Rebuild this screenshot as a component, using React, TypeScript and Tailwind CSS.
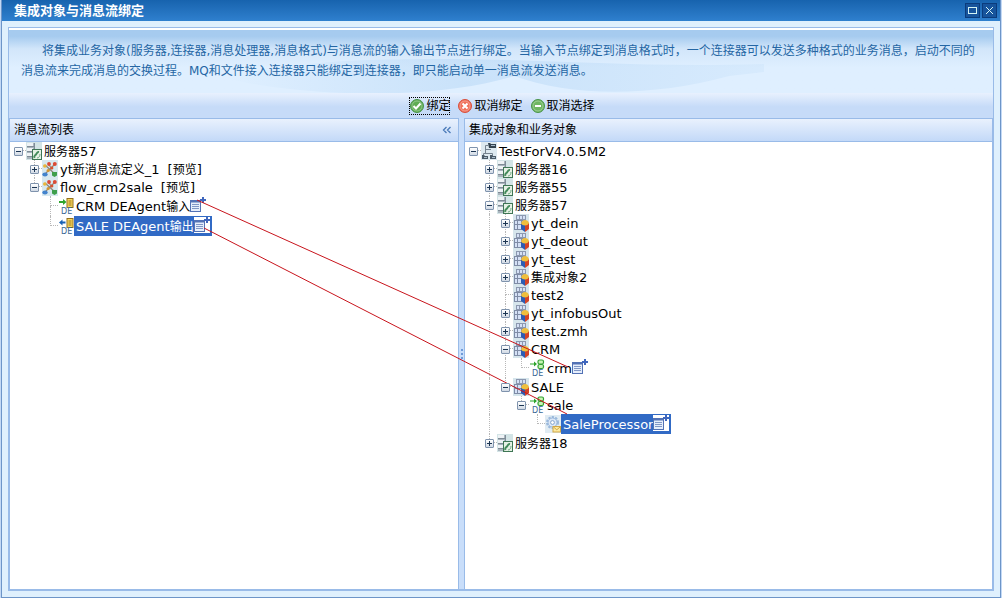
import type { ReactNode } from "react";

type Kind = "server" | "flow" | "agentIn" | "agentOut" | "adapter" | "root" | "object" | "processor";

interface Node {
  label: string;
  kind: Kind;
  open?: boolean;
  preview?: boolean;
  linked?: boolean;
  selected?: boolean;
  children?: Node[];
}

const flows: Node[] = [
  {
    label: "服务器57", kind: "server", open: true, children: [
      { label: "yt新消息流定义_1", kind: "flow", open: false, preview: true },
      {
        label: "flow_crm2sale", kind: "flow", open: true, preview: true, children: [
          { label: "CRM DEAgent输入", kind: "agentIn", linked: true },
          { label: "SALE DEAgent输出", kind: "agentOut", linked: true, selected: true },
        ],
      },
    ],
  },
];

const objects: Node[] = [
  {
    label: "TestForV4.0.5M2", kind: "root", open: true, children: [
      { label: "服务器16", kind: "server", open: false },
      { label: "服务器55", kind: "server", open: false },
      {
        label: "服务器57", kind: "server", open: true, children: [
          { label: "yt_dein", kind: "object", open: false },
          { label: "yt_deout", kind: "object", open: false },
          { label: "yt_test", kind: "object", open: false },
          { label: "集成对象2", kind: "object", open: false },
          { label: "test2", kind: "object" },
          { label: "yt_infobusOut", kind: "object", open: false },
          { label: "test.zmh", kind: "object", open: false },
          {
            label: "CRM", kind: "object", open: true,
            children: [{ label: "crm", kind: "adapter", linked: true }],
          },
          {
            label: "SALE", kind: "object", open: true, children: [
              {
                label: "sale", kind: "adapter", open: true,
                children: [{ label: "SaleProcessor", kind: "processor", linked: true, selected: true }],
              },
            ],
          },
        ],
      },
      { label: "服务器18", kind: "server", open: false },
    ],
  },
];

/* Han text is set one size smaller than Latin text. */
function Mixed({ text }: { text: string }) {
  return (
    <>
      {text.split(/([\u4e00-\u9fff]+)/).filter(Boolean).map((part, i) => (
        <span key={i} className={/[\u4e00-\u9fff]/.test(part) ? "text-[12px]" : "text-[13px]"}>{part}</span>
      ))}
    </>
  );
}

function Letters() {
  return <text x="3" y="17" fontSize="8" fontFamily="DejaVu Sans" fill="#3a6794">DE</text>;
}

function NodeIcon({ kind }: { kind: Kind }) {
  let art: ReactNode;
  if (kind === "server") {
    art = (
      <>
        <rect width="16" height="18" fill="#d3e4e6" />
        <rect x="1" y="1" width="8" height="16" fill="#a9b4bd" />
        <path d="M1 1h6v3H1zM1 6h6v3H1zM1 11h6v3H1z" fill="#eef2f5" />
        <path d="M1 4.500h7M1 9.500h7M1 14.500h7M8.500 1v16" stroke="#7f8c97" />
        <rect x="6.500" y="7.500" width="9" height="10" fill="#e6f1e5" stroke="#3f7655" />
        <path d="M8.500 16c-1-2 .5-2.500 1.500-3.500s1-3 3-2.500" fill="none" stroke="#438a5a" strokeWidth="2" />
        <path d="M11 16c2 0 3-2 3-4" fill="none" stroke="#6fa983" />
      </>
    );
  } else if (kind === "flow") {
    art = (
      <>
        <rect width="16" height="18" fill="#d7e8ef" />
        <path d="M3 5l10 9M13 4L3 14M7 5l3 4" stroke="#8d8578" strokeWidth="1.200" />
        <circle cx="2.800" cy="6" r="1.800" fill="#e9b63a" />
        <circle cx="7" cy="4" r="1.900" fill="#dc4a34" />
        <circle cx="12.800" cy="4" r="2" fill="#dc4a34" />
        <circle cx="9.800" cy="8" r="1.600" fill="#d9532f" />
        <circle cx="6.200" cy="10.500" r="1.600" fill="#d6962e" />
        <ellipse cx="3" cy="14.500" rx="2.700" ry="2" fill="#4383cd" />
        <path d="M10 12h5v3.500l-2.500 1.500-2.500-1.500z" fill="#3f9f4c" />
      </>
    );
  } else if (kind === "agentIn" || kind === "agentOut") {
    art = (
      <>
        {kind === "agentIn"
          ? <path d="M1 4h4V2l3.500 3L5 8V6H1z" fill="#2da52b" />
          : <path d="M7.500 4.500H4.500V2.500L1 5.500l3.500 3v-2h3z" fill="#1760b5" />}
        <rect x="9" y="1.500" width="6" height="9" fill="#f6d65c" stroke="#94701c" />
        <path d="M10.500 4h3M10.500 6h3M10.500 8h3" stroke="#94701c" strokeWidth=".9" />
        <Letters />
      </>
    );
  } else if (kind === "adapter") {
    art = (
      <>
        <path d="M1 4.500h4V2.500l3 2.500-3 2.500v-2H1z" fill="#2da52b" />
        <rect x="9" y="1" width="5.500" height="4" rx="1.500" fill="#c8f4b4" stroke="#33a033" strokeWidth="1.200" />
        <rect x="9" y="5.500" width="5.500" height="4" rx="1.500" fill="#c8f4b4" stroke="#33a033" strokeWidth="1.200" />
        <Letters />
      </>
    );
  } else if (kind === "root") {
    art = (
      <>
        <rect width="16" height="18" fill="#dde9f0" />
        <path d="M7 3.500H4.500V11M4.500 7.500H10M2.500 14V11.500h9V14" stroke="#75838f" fill="none" />
        <path d="M7 1h2l1 1h5v4H8z" fill="#34434f" />
        <path d="M1 13h2l1 1h3v3H1zM9 13h2l1 1h3v3H9z" fill="#4c5c69" />
        <path d="M10 3.500h4M3 15.500h3M11 15.500h3" stroke="#a9bccb" />
      </>
    );
  } else if (kind === "object") {
    art = (
      <>
        <rect width="16" height="18" fill="#d6e5ec" />
        <path d="M3 1h10v11H1V6h2z" fill="#8c98b0" />
        <path d="M1 6h9v10H1z" fill="#7f8ca6" />
        <path d="M4 2h2v3H4zM7 2h2v3H7zM10 2h2v3h-2zM2 7h2v3H2zM5 7h3v3H5zM9 7h3v2H9zM2 11h2v4H2zM5 11h3v4H5z" fill="#d5e1f6" />
        <path d="M8 9l4 1.500V18l-4-3z" fill="#2c5cb3" />
        <path d="M12 10.500L16 9v6l-4 3z" fill="#d34327" />
        <path d="M8 9.500Q9 6 12 6t4 3q-1 2.500-4 2.500T8 9.500z" fill="#efbf3d" />
      </>
    );
  } else {
    art = (
      <>
        <rect width="16" height="18" fill="#e1ecf3" />
        <circle cx="7.500" cy="7.500" r="5.500" fill="none" stroke="#9ab8dc" strokeWidth="2" strokeDasharray="2.300 1.200" />
        <circle cx="7.500" cy="7.500" r="4.500" fill="#dbe7f7" stroke="#9ab8dc" />
        <circle cx="7.500" cy="7.500" r="1.900" fill="#fff" stroke="#83a3cc" />
        <rect x="8" y="11.500" width="7.500" height="5.500" fill="#fdeaa0" stroke="#d2a746" />
        <path d="M8.500 12l3.300 2.800L15 12" fill="none" stroke="#d2a746" />
      </>
    );
  }
  return <svg className="h-[18px] w-4 shrink-0" viewBox="0 0 16 18" aria-hidden="true">{art}</svg>;
}

function LinkIcon({ selected }: { selected?: boolean }) {
  return (
    <svg className="h-5 w-[18px] shrink-0" viewBox="0 0 18 20" aria-hidden="true">
      {selected && <rect y="1" width="16" height="16" fill="#fff" />}
      <rect x=".5" y="4.500" width="10" height="11" fill="#e6eefb" stroke="#5372b5" />
      <path d="M1 5.500h9" stroke="#5372b5" strokeWidth="2" />
      <path d="M2 8.500h7M2 10.500h7M2 12.500h7" stroke="#8097c6" />
      <path d="M13 1v6M10 4h6" stroke="#3f66bd" strokeWidth="2" />
    </svg>
  );
}

const guide = "border-dotted border-[#b8b8b8]";

function Row({ node, guides, last, first }: { node: Node; guides: boolean[]; last: boolean; first: boolean }) {
  return (
    <li role="treeitem" aria-expanded={node.open} aria-selected={!!node.selected}>
      <div className={`flex items-center whitespace-nowrap ${node.linked ? "h-5" : "h-[18px]"}`}>
        {guides.map((on, i) => (
          <span key={i} className="flex w-4 shrink-0 self-stretch pl-2">
            {on && <span className={`border-l ${guide}`} />}
          </span>
        ))}
        <span className="grid w-4 shrink-0 grid-cols-2 grid-rows-2 self-stretch">
          <span className={`col-start-2 row-start-1 border-b ${guide} ${first ? "" : "border-l"}`} />
          <span className={`col-start-2 row-start-2 ${guide} ${last ? "" : "border-l"}`} />
          {node.open !== undefined && (
            <button
              type="button"
              aria-label={`${node.open ? "收起" : "展开"} ${node.label}`}
              className="z-10 col-span-2 col-start-1 row-span-2 row-start-1 flex size-[9px] place-self-center rounded-[1px] border border-[#7f93ad] bg-linear-to-b from-white to-[#d0d9e4]"
            >
              <svg className="size-[7px]" viewBox="0 0 7 7" aria-hidden="true">
                <path d={node.open ? "M1 3.500h5" : "M1 3.500h5M3.500 1v5"} stroke="#1c3552" />
              </svg>
            </button>
          )}
        </span>
        <NodeIcon kind={node.kind} />
        <span className={`flex items-center self-stretch pl-0.5 ${node.selected ? "bg-[#316ac5] text-white" : ""}`}>
          <span className="leading-[18px]"><Mixed text={node.label} /></span>
          {node.linked && <LinkIcon selected={node.selected} />}
        </span>
        {node.preview && <a href="#preview" className="ml-2 leading-[18px] text-black"><Mixed text="[预览]" /></a>}
      </div>
      {node.open && node.children && (
        <ul role="group">
          {node.children.map((child, i, all) => (
            <Row key={i} node={child} guides={[...guides, !last && !first]} last={i === all.length - 1} first={false} />
          ))}
        </ul>
      )}
    </li>
  );
}

function Tree({ nodes, label }: { nodes: Node[]; label: string }) {
  return (
    <ul role="tree" aria-label={label}>
      {nodes.map((n, i) => <Row key={i} node={n} guides={[]} last={i === nodes.length - 1} first />)}
    </ul>
  );
}

function Panel({ title, action, children, className }: { title: string; action?: ReactNode; children: ReactNode; className: string }) {
  return (
    <section className={`flex min-w-0 flex-col bg-white ${className}`}>
      <header className="flex h-6 shrink-0 items-center justify-between border-y border-[#99bbe8] bg-linear-to-b from-[#e9f1fd] to-[#c3d9f8] px-1">
        <h2 className="text-[12px] text-black">{title}</h2>
        {action}
      </header>
      <div className="min-h-0 flex-1">{children}</div>
    </section>
  );
}

function RoundIcon({ color, edge, mark }: { color: string; edge: string; mark: string }) {
  return (
    <svg className="size-4" viewBox="0 0 16 16" aria-hidden="true">
      <circle cx="8" cy="8" r="6.500" fill={color} stroke={edge} />
      <circle cx="8" cy="8" r="5" fill="none" stroke="#fff" strokeOpacity=".3" />
      <path d={mark} fill="none" stroke="#fff" strokeWidth="2" />
    </svg>
  );
}

const toolButton = "flex h-[18px] items-center gap-px text-[12px] text-black";
const windowButton = "flex size-[15px] items-center justify-center border border-[#0b3c7c] bg-[#17549c]";

export default function App() {
  return (
    <div className="flex h-screen flex-col bg-[#c3d9f5] px-px font-['DejaVu_Sans','Noto_Sans_CJK_SC',sans-serif]">
      <main className="relative flex min-h-0 flex-1 flex-col border-x border-b border-[#6d95c8] bg-[#dff0fd]">
        <header className="flex h-[21px] shrink-0 items-center justify-between bg-linear-to-b from-[#1763ae] to-[#2f80ce] pr-[3px] pl-3">
          <h1 className="text-[13px] font-bold text-white">集成对象与消息流绑定</h1>
          <div className="flex gap-0.5">
            <button type="button" aria-label="最大化" className={windowButton}>
              <svg className="size-[13px]" viewBox="0 0 13 13"><rect x="2.500" y="3.500" width="8" height="6" fill="none" stroke="#d5f4f4" /></svg>
            </button>
            <button type="button" aria-label="关闭" className={windowButton}>
              <svg className="size-[13px]" viewBox="0 0 13 13"><path d="M3 3l7 7M10 3l-7 7" stroke="#d5f4f4" /></svg>
            </button>
          </div>
        </header>

        <div className="m-1.5 flex min-h-0 flex-1 flex-col border border-b-2 border-[#99bbe8]">
          <div className="relative h-[65px] shrink-0 border-t-2 border-white bg-linear-to-b from-[#a6cbef] from-10% via-[#d2e6fa] via-30% to-[#dfefff] to-60%">
            <svg className="absolute inset-0 h-full w-full" viewBox="0 0 984 63" preserveAspectRatio="none" aria-hidden="true">
              <defs>
                <linearGradient id="wave" x1="0" y1="0" x2="1" y2="0">
                  <stop offset="0" stopColor="#a9cff2" stopOpacity="0" />
                  <stop offset=".45" stopColor="#a9cff2" stopOpacity=".4" />
                  <stop offset="1" stopColor="#a9cff2" stopOpacity=".15" />
                </linearGradient>
              </defs>
              <path d="M215 48C290 66 420 72 505 46C560 66 640 68 720 46L755 42V34C620 38 520 28 420 29S300 32 215 48z" fill="url(#wave)" />
            </svg>
            <p className="relative px-3 pt-[11px] indent-[21px] text-[12px] leading-5 whitespace-nowrap text-[#2466a4]">
              将集成业务对象(服务器,连接器,消息处理器,消息格式)与消息流的输入输出节点进行绑定。当输入节点绑定到消息格式时，一个连接器可以发送多种格式的业务消息，启动不同的
              <span className="block indent-0">消息流来完成消息的交换过程。MQ和文件接入连接器只能绑定到连接器，即只能启动单一消息流发送消息。</span>
            </p>
          </div>
          <div className="flex h-[25px] shrink-0 items-center justify-center gap-[7px] bg-linear-to-b from-[#e8f1fe] to-[#c6dbf8] to-55% pl-0.5">
            <button type="button" className={`${toolButton} outline outline-dotted -outline-offset-1 outline-black`}>
              <RoundIcon color="#5fac54" edge="#4a944a" mark="M4.500 8l2.500 2.500 4.500-5" />绑定
            </button>
            <button type="button" className={toolButton}>
              <RoundIcon color="#f0705a" edge="#d84f3c" mark="M5.500 5.500l5 5M10.500 5.500l-5 5" />取消绑定
            </button>
            <button type="button" className={toolButton}>
              <RoundIcon color="#6fb662" edge="#4a944a" mark="M5 8h6" />取消选择
            </button>
          </div>

          <div className="flex min-h-0 flex-1">
            <Panel
              title="消息流列表"
              className="w-[449px] shrink-0 border-l border-[#99bbe8]"
              action={
                <button type="button" aria-label="收起面板" className="mr-0.5">
                  <svg className="size-[10px]" viewBox="0 0 10 10"><path d="M4.500 2L1.500 5l3 3M8.500 2L5.500 5l3 3" fill="none" stroke="#4a7ab8" strokeWidth="1.300" /></svg>
                </button>
              }
            >
              <Tree nodes={flows} label="消息流列表" />
            </Panel>
            <div role="separator" className="flex w-[7px] shrink-0 items-center justify-center border-x border-[#99bbe8] bg-[#c9defa]">
              <span className="h-2.5 border-l-2 border-dotted border-[#6f9ad8]" />
            </div>
            <Panel title="集成对象和业务对象" className="flex-1 border-r border-[#99bbe8]">
              <Tree nodes={objects} label="集成对象和业务对象" />
            </Panel>
          </div>
        </div>

        <svg className="pointer-events-none absolute top-0 left-0 h-full w-full" aria-hidden="true">
          <path d="M195 200L566 367M202 228L565 414" fill="none" stroke="#c8141c" />
        </svg>
      </main>
    </div>
  );
}
